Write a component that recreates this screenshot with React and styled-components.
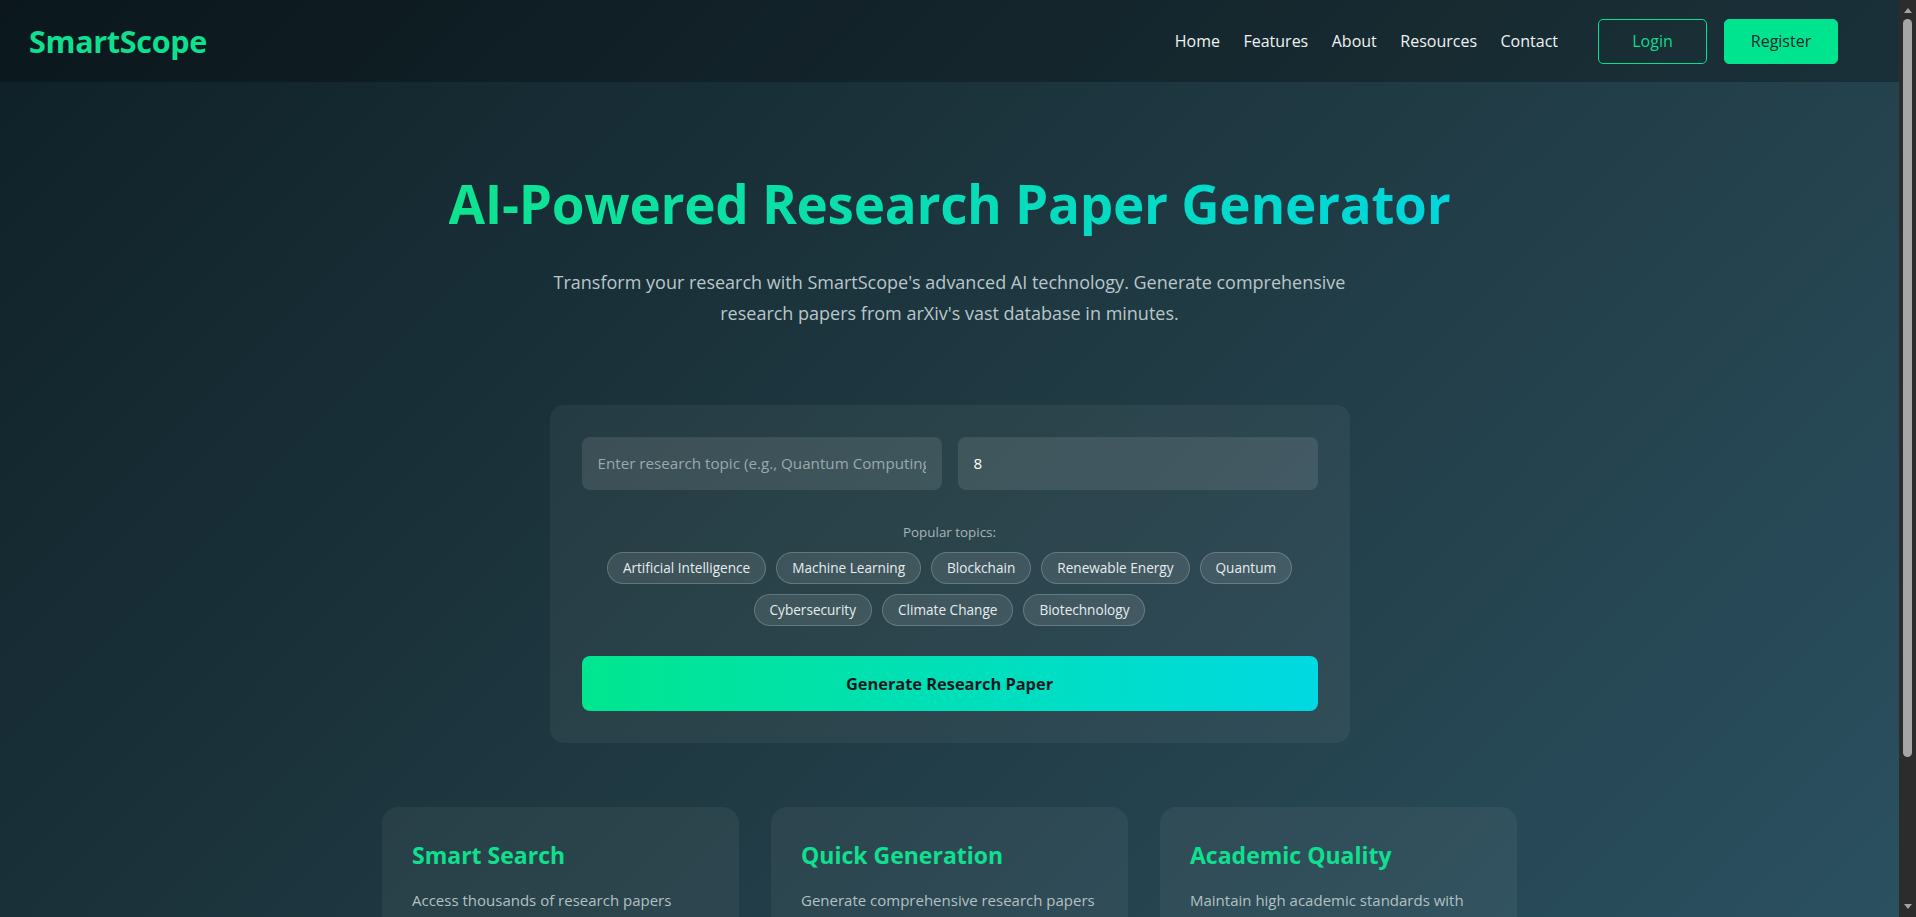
import React from "react";
import styled, { createGlobalStyle } from "styled-components";

const GlobalStyle = createGlobalStyle`
  *, *::before, *::after { box-sizing: border-box; }
  html, body {
    margin: 0;
    padding: 0;
  }
  body {
    font-family: "Open Sans", "Noto Sans", sans-serif;
    color: #ffffff;
    background: linear-gradient(135deg, #0f2027 0%, #203a43 50%, #2c5364 100%);
    min-height: 100vh;
  }
`;

const Page = styled.div`
  min-height: 100vh;
  display: flex;
  flex-direction: column;
  padding-right: 17px;
`;

/* window scrollbar, drawn over the right edge */
const ScrollTrack = styled.div`
  position: fixed;
  top: 0;
  right: 0;
  bottom: 0;
  width: 17px;
  background: #2c2c2c;
  display: flex;
  flex-direction: column;
  align-items: center;
  justify-content: space-between;
  padding: 4px 0;
  z-index: 10;
`;

const ScrollArrow = styled.div`
  width: 0;
  height: 0;
  border-left: 4px solid transparent;
  border-right: 4px solid transparent;
  ${(p) =>
    p.$down
      ? "border-top: 5px solid #a3a3a3;"
      : "border-bottom: 5px solid #a3a3a3;"}
  margin: 4px 0;
`;

const ScrollThumb = styled.div`
  width: 9px;
  height: 738px;
  border-radius: 5px;
  background: #a6a6a6;
  margin-top: 2px;
  margin-bottom: auto;
`;

const Nav = styled.nav`
  height: 82px;
  display: flex;
  align-items: center;
  justify-content: space-between;
  padding: 0 61px 0 29px;
  background: rgba(0, 0, 0, 0.26);
`;

const Logo = styled.div`
  font-size: 30.5px;
  font-weight: 700;
  color: #0fe08f;
  letter-spacing: -0.3px;
`;

const NavRight = styled.div`
  display: flex;
  align-items: center;
`;

const NavLinks = styled.ul`
  display: flex;
  align-items: center;
  gap: 23.5px;
  list-style: none;
  margin: 0 40px 0 0;
  padding: 0;
`;

const NavLink = styled.a`
  font-size: 16px;
  color: #eef3f4;
  text-decoration: none;
  cursor: pointer;
`;

const AuthGroup = styled.div`
  display: flex;
  gap: 17px;
`;

const AuthButton = styled.button`
  height: 45px;
  padding: 0 24px;
  min-width: ${(p) => (p.$filled ? "114px" : "109px")};
  border-radius: 5px;
  font-family: inherit;
  font-size: 16px;
  cursor: pointer;
  border: 1px solid #00e38f;
  background: ${(p) => (p.$filled ? "#00e38f" : "transparent")};
  color: ${(p) => (p.$filled ? "#0f2a2c" : "#12d98e")};
`;

const Hero = styled.section`
  display: flex;
  flex-direction: column;
  align-items: center;
  padding: 90px 24px 64px;
`;

const Title = styled.h1`
  margin: 0;
  font-size: 53px;
  line-height: 1.2;
  font-weight: 700;
  letter-spacing: -0.3px;
  background: linear-gradient(90deg, #0fe38f 0%, #00d6dc 100%);
  -webkit-background-clip: text;
  background-clip: text;
  color: transparent;
`;

const Subtitle = styled.p`
  margin: 31px 0 0;
  max-width: 820px;
  text-align: center;
  font-size: 18px;
  line-height: 1.76;
  color: #b9c6ca;
`;

const FormCard = styled.div`
  margin-top: 75px;
  width: 800px;
  padding: 32px;
  border-radius: 14px;
  background: rgba(255, 255, 255, 0.05);
`;

const InputRow = styled.div`
  display: grid;
  grid-template-columns: 1fr 1fr;
  gap: 16px;
`;

const Field = styled.input`
  height: 53px;
  width: 100%;
  padding: 0 16px;
  border: none;
  border-radius: 8px;
  background: rgba(255, 255, 255, 0.1);
  color: #ffffff;
  font-family: inherit;
  font-size: 15.2px;
  outline: none;
  &::placeholder {
    color: #9aa9ae;
  }
`;

const TopicsLabel = styled.div`
  margin-top: 33px;
  text-align: center;
  font-size: 13.4px;
  color: #a7b4b8;
`;

const Chips = styled.div`
  margin-top: 11px;
  display: flex;
  flex-wrap: wrap;
  justify-content: center;
  gap: 10px;
  padding: 0 20px;
`;

const Chip = styled.button`
  height: 32px;
  padding: 0 15px;
  border-radius: 16px;
  border: 1px solid rgba(255, 255, 255, 0.2);
  background: rgba(255, 255, 255, 0.1);
  color: #e6ecee;
  font-family: inherit;
  font-size: 13.6px;
  cursor: pointer;
`;

const GenerateButton = styled.button`
  margin-top: 30px;
  width: 100%;
  height: 55px;
  border: none;
  border-radius: 8px;
  background: linear-gradient(90deg, #00e68f 0%, #00d9e2 100%);
  color: #0b1a1e;
  font-family: inherit;
  font-size: 16.4px;
  font-weight: 700;
  cursor: pointer;
`;

const Features = styled.section`
  margin-top: 64px;
  display: grid;
  grid-template-columns: repeat(3, 357px);
  gap: 32px;
  justify-content: center;
`;

const FeatureCard = styled.div`
  padding: 31px 30px 30px;
  border-radius: 16px;
  background: rgba(255, 255, 255, 0.05);
`;

const FeatureTitle = styled.h3`
  margin: 0;
  font-size: 23px;
  line-height: 1.5;
  font-weight: 700;
  color: #0fe08f;
`;

const FeatureText = styled.p`
  margin: 16px 0 0;
  font-size: 15px;
  line-height: 1.7;
  color: #b3c0c4;
`;

const topics = [
  "Artificial Intelligence",
  "Machine Learning",
  "Blockchain",
  "Renewable Energy",
  "Quantum",
  "Cybersecurity",
  "Climate Change",
  "Biotechnology",
];

const features = [
  {
    title: "Smart Search",
    text: "Access thousands of research papers from arXiv's extensive database with intelligent filtering.",
  },
  {
    title: "Quick Generation",
    text: "Generate comprehensive research papers in minutes with our advanced AI technology.",
  },
  {
    title: "Academic Quality",
    text: "Maintain high academic standards with proper citations and structured formatting.",
  },
];

export default function App() {
  return (
    <>
      <GlobalStyle />
      <Page>
        <Nav>
          <Logo>SmartScope</Logo>
          <NavRight>
            <NavLinks>
              {["Home", "Features", "About", "Resources", "Contact"].map((l) => (
                <li key={l}>
                  <NavLink>{l}</NavLink>
                </li>
              ))}
            </NavLinks>
            <AuthGroup>
              <AuthButton>Login</AuthButton>
              <AuthButton $filled>Register</AuthButton>
            </AuthGroup>
          </NavRight>
        </Nav>
        <Hero>
          <Title>AI-Powered Research Paper Generator</Title>
          <Subtitle>
            Transform your research with SmartScope's advanced AI technology. Generate comprehensive
            research papers from arXiv's vast database in minutes.
          </Subtitle>
          <FormCard>
            <InputRow>
              <Field placeholder="Enter research topic (e.g., Quantum Computing)" />
              <Field defaultValue="8" type="number" />
            </InputRow>
            <TopicsLabel>Popular topics:</TopicsLabel>
            <Chips>
              {topics.map((t) => (
                <Chip key={t}>{t}</Chip>
              ))}
            </Chips>
            <GenerateButton>Generate Research Paper</GenerateButton>
          </FormCard>
          <Features>
            {features.map((f) => (
              <FeatureCard key={f.title}>
                <FeatureTitle>{f.title}</FeatureTitle>
                <FeatureText>{f.text}</FeatureText>
              </FeatureCard>
            ))}
          </Features>
        </Hero>
      </Page>
      <ScrollTrack aria-hidden="true">
        <ScrollArrow />
        <ScrollThumb />
        <ScrollArrow $down />
      </ScrollTrack>
    </>
  );
}
